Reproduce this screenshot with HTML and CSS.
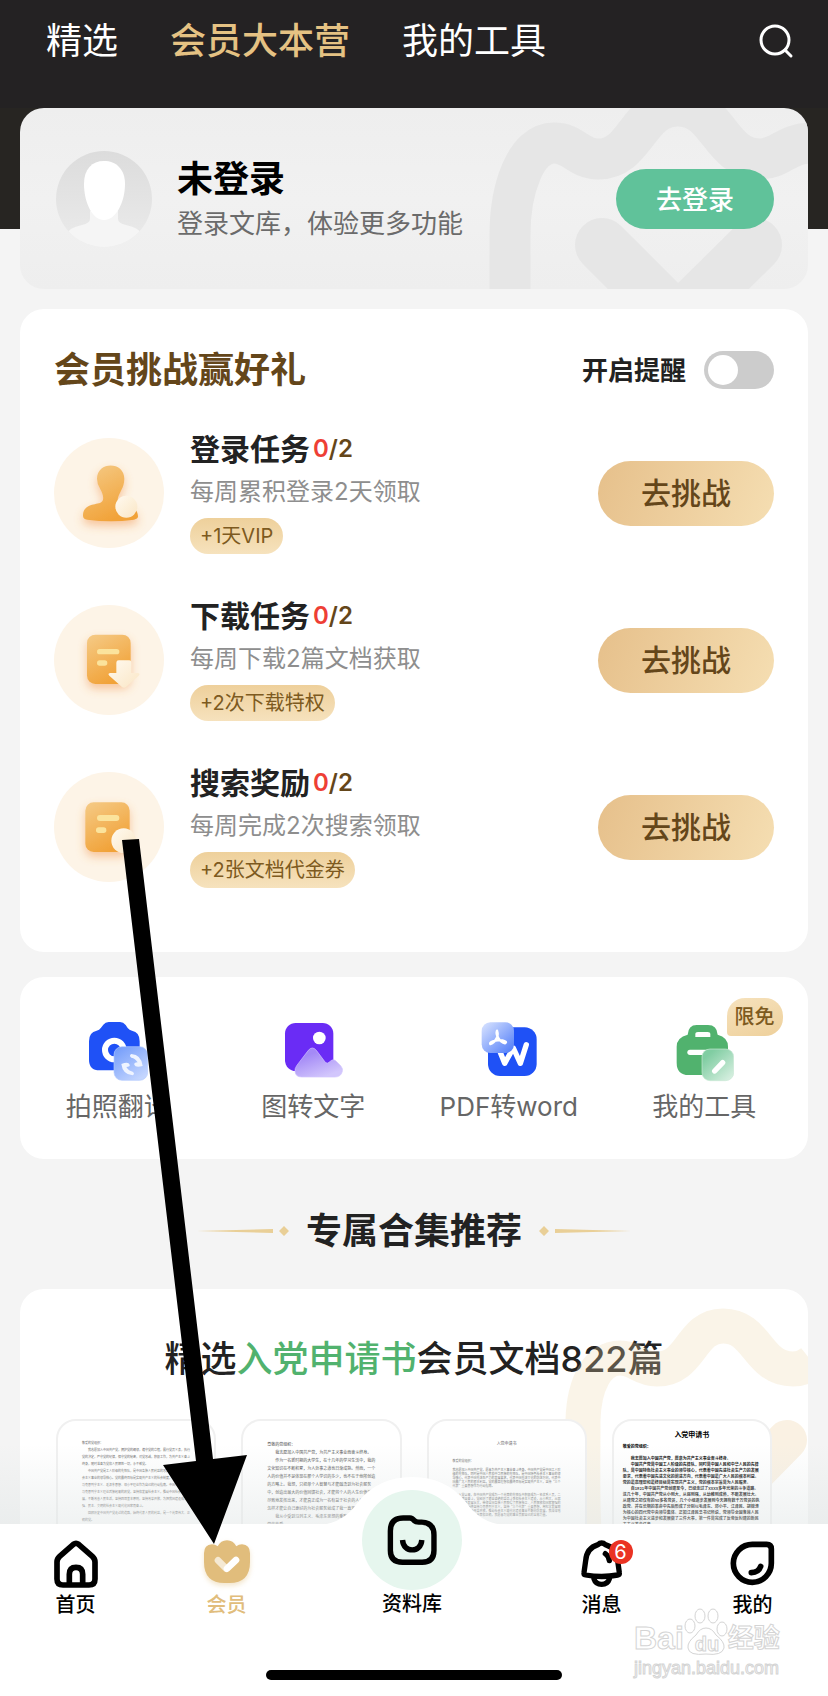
FILE: index.html
```html
<!DOCTYPE html>
<html lang="zh-CN">
<head>
  <meta charset="UTF-8">
  <meta name="viewport" content="width=device-width, initial-scale=1.0">
  <title>会员大本营</title>
  <link rel="stylesheet" href="styles.css">
</head>
<body>

<div class="app">
  <header class="topbar">
    <nav class="tabs">
      <a href="#">精选</a>
      <a href="#" class="active">会员大本营</a>
      <a href="#">我的工具</a>
    </nav>
    <button class="search" aria-label="搜索">
      <svg width="36" height="36" viewBox="0 0 36 36" fill="none" stroke="#fff" stroke-width="3" stroke-linecap="round"><circle cx="17" cy="17" r="14"/><path d="M27 27l6 6"/></svg>
    </button>
  </header>

  <main class="content">
    <section class="hero">
      <div class="login-card">
        <svg class="crown" viewBox="488 108 320 181" fill="none" stroke="#e6e6e6">
          <path stroke-width="41" d="M510 300V235C510 190 525 143 554 143C574 143 578 159 598 159C637 159 637 106 678 106C719 106 719 159 760 159C780 159 786 143 812 143"/>
          <path stroke-width="54" stroke-linecap="round" d="M602 245L678 321L755 245"/>
        </svg>
        <svg class="avatar" width="96" height="96" viewBox="0 0 96 96">
          <defs>
            <linearGradient id="avatarBg" x1="0" y1="0" x2="0" y2="1"><stop offset="0" stop-color="#dcdcdc"/><stop offset="1" stop-color="#ebebeb"/></linearGradient>
            <clipPath id="avatarClip"><circle cx="48" cy="48" r="48"/></clipPath>
          </defs>
          <g clip-path="url(#avatarClip)">
            <rect width="96" height="96" fill="url(#avatarBg)"/>
            <path fill="#f5f5f5" d="M34 60V68Q34 72 26 74Q12 77 10 84V98H86V84Q84 77 70 74Q62 72 62 68V60Z"/>
            <path fill="#fff" d="M28 33C28 18 36 10 48 10C60 10 69 18 69 33C69 51 60 69 48 69C36 69 28 51 28 33Z"/>
          </g>
        </svg>
        <div class="login-text">
          <h2>未登录</h2>
          <p>登录文库，体验更多功能</p>
        </div>
        <button class="login-btn">去登录</button>
      </div>
    </section>

    <section class="card challenge">
      <div class="challenge-head">
        <h2>会员挑战赢好礼</h2>
        <label for="remind">开启提醒</label>
        <input type="checkbox" id="remind" class="switch">
      </div>

      <div class="task">
        <svg class="task-icon" viewBox="0 0 330 330">
          <defs>
            <linearGradient id="orange" x1="0" y1="0" x2=".5" y2="1"><stop offset="0" stop-color="#f5cb87"/><stop offset="1" stop-color="#f1a238"/></linearGradient>
            <linearGradient id="cream" x1="0" y1="0" x2="1" y2="1"><stop offset="0" stop-color="#fffaf0"/><stop offset="1" stop-color="#fae6c5"/></linearGradient>
            <filter id="glow" x="-30%" y="-30%" width="160%" height="170%"><feDropShadow dx="0" dy="14" stdDeviation="14" flood-color="#f08a3c" flood-opacity=".45"/></filter>
          </defs>
          <circle cx="165" cy="165" r="165" fill="#fdf4e7"/>
          <path filter="url(#glow)" fill="url(#orange)" d="M129 122C129 69 211 69 211 122C211 150 194 164 191 184C190 194 252 195 252 235Q252 243 240 245Q170 254 100 245Q87 243 87 233C87 200 120 200 138 195C154 189 147 168 139 154Q129 138 129 122Z"/>
          <circle cx="217" cy="206" r="33" fill="url(#cream)"/>
        </svg>
        <div class="task-info">
          <h3>登录任务<span class="count"><b>0</b>/2</span></h3>
          <p>每周累积登录2天领取</p>
          <span class="pill">+1天VIP</span>
        </div>
        <button class="go">去挑战</button>
      </div>

      <div class="task">
        <svg class="task-icon" viewBox="0 0 330 330">
          <circle cx="165" cy="165" r="165" fill="#fdf4e7"/>
          <rect filter="url(#glow)" x="99" y="89" width="131" height="148" rx="25" fill="url(#orange)"/>
          <rect x="129" y="132" width="67" height="16" rx="8" fill="#fbe39c"/>
          <rect x="129" y="166" width="31" height="16" rx="8" fill="#fbe39c"/>
          <path fill="url(#cream)" d="M194 166H226Q232 166 232 173V204H252Q260 206 254 212L216 246Q210 251 204 246L166 212Q160 206 168 204H187V173Q187 166 194 166Z"/>
        </svg>
        <div class="task-info">
          <h3>下载任务<span class="count"><b>0</b>/2</span></h3>
          <p>每周下载2篇文档获取</p>
          <span class="pill">+2次下载特权</span>
        </div>
        <button class="go">去挑战</button>
      </div>

      <div class="task">
        <svg class="task-icon" viewBox="0 0 330 330">
          <circle cx="165" cy="165" r="165" fill="#fdf4e7"/>
          <rect filter="url(#glow)" x="94" y="91" width="133" height="149" rx="25" fill="url(#orange)"/>
          <rect x="129" y="129" width="67" height="18" rx="9" fill="#fbe39c"/>
          <rect x="126" y="166" width="31" height="17" rx="8" fill="#fbe39c"/>
          <circle cx="209" cy="206" r="37" fill="url(#cream)"/>
        </svg>
        <div class="task-info">
          <h3>搜索奖励<span class="count"><b>0</b>/2</span></h3>
          <p>每周完成2次搜索领取</p>
          <span class="pill">+2张文档代金券</span>
        </div>
        <button class="go">去挑战</button>
      </div>
    </section>

    <section class="card tools">
      <a href="#" class="tool">
        <svg viewBox="0 0 180 180">
          <defs>
            <linearGradient id="blueGlass" x1="0" y1="0" x2=".7" y2="1"><stop offset="0" stop-color="#6f99fa"/><stop offset="1" stop-color="#c3d5fe"/></linearGradient>
          </defs>
          <path fill="#1f51f6" d="M62 0H96Q106 0 113 9L119 18Q124 24 132 26Q155 30 155 58V113Q155 145 123 145H35Q3 145 3 113V58Q3 30 26 26Q34 24 39 17L46 8Q52 0 62 0Z"/>
          <circle cx="79" cy="84" r="28" fill="none" stroke="#fff" stroke-width="18"/>
          <rect x="78" y="74" width="101" height="101" rx="24" fill="url(#blueGlass)" stroke="#b4cafe" stroke-width="2"/>
          <path fill="#eff4ff" d="M130 96Q160 98 164 132Q142 138 139 128Q137 122 149 121Q142 109 130 107Q122 101 130 96ZM134 160Q104 158 100 126Q122 118 125 128Q127 134 115 135Q122 147 134 149Q142 155 134 160Z"/>
        </svg>
        <span>拍照翻译</span>
      </a>
      <a href="#" class="tool">
        <svg viewBox="0 0 180 180">
          <defs>
            <linearGradient id="violetGlass" x1="0" y1="0" x2=".6" y2="1"><stop offset=".3" stop-color="#a48af6"/><stop offset="1" stop-color="#d2c6fc"/></linearGradient>
          </defs>
          <rect x="6" y="3" width="145" height="144" rx="32" fill="#6a2cf5"/>
          <circle cx="109" cy="48" r="19" fill="#fff"/>
          <path fill="url(#violetGlass)" stroke="#d2c4fd" stroke-width="2" d="M41 131L76 85Q88 71 100 85L127 121Q133 126 138 121L144 116Q151 110 158 116L173 131Q180 139 178 148Q174 165 156 165H56Q38 165 36 149Q35 139 41 131Z"/>
        </svg>
        <span>图转文字</span>
      </a>
      <a href="#" class="tool">
        <svg viewBox="0 0 180 180">
          <defs>
            <linearGradient id="paleGlass" x1="0" y1="0" x2="1" y2="1"><stop offset="0" stop-color="#dbe5ff"/><stop offset="1" stop-color="#4d7af8"/></linearGradient>
          </defs>
          <rect x="27" y="16" width="146" height="146" rx="36" fill="#1f51f6"/>
          <path fill="none" stroke="#fff" stroke-width="16" stroke-linecap="round" stroke-linejoin="round" d="M61 84L77 124L103 78L124 124L142 68"/>
          <rect x="8" y="1" width="97" height="92" rx="26" fill="url(#paleGlass)"/>
          <path fill="none" stroke="#fff" stroke-width="7" stroke-linecap="round" stroke-linejoin="round" d="M54 26Q59 40 52 50Q44 64 34 66Q30 60 50 56Q66 52 78 58Q84 60 78 64Q66 62 58 48Q50 36 54 26Z"/>
        </svg>
        <span>PDF转word</span>
      </a>
      <a href="#" class="tool">
        <em class="tag">限免</em>
        <svg viewBox="0 0 180 180">
          <defs>
            <linearGradient id="greenGlass" x1="0" y1="0" x2=".9" y2="1"><stop offset=".2" stop-color="#80cda2"/><stop offset="1" stop-color="#d9f0e2"/></linearGradient>
          </defs>
          <path fill="#51b26e" fill-rule="evenodd" d="M68 9H102Q129 9 131 38Q162 46 162 74V122Q162 159 126 159H44Q8 159 8 122V74Q8 46 41 38Q43 9 68 9ZM72 30Q64 30 64 37V45H109V37Q109 30 101 30Z"/>
          <rect x="40" y="83" width="80" height="16" rx="8" fill="#fff"/>
          <rect x="84" y="81" width="95" height="95" rx="24" fill="url(#greenGlass)" stroke="#c9e9d5" stroke-width="2"/>
          <path stroke="#fff" stroke-width="16" stroke-linecap="round" d="M122 147L146 122"/>
        </svg>
        <span>我的工具</span>
      </a>
    </section>

    <div class="section-title">
      <svg width="92" height="10" viewBox="0 0 92 10" fill="#e9cf97"><path d="M0 5L76 3V7ZM87 0L92 5L87 10L82 5Z"/></svg>
      <h2>专属合集推荐</h2>
      <svg width="92" height="10" viewBox="0 0 92 10" fill="#e9cf97"><path d="M92 5L16 3V7ZM5 0L10 5L5 10L0 5Z"/></svg>
    </div>

    <section class="card docs">
      <h2>精选<span>入党申请书</span>会员文档822篇</h2>
      <svg class="deco" viewBox="564 1289 244 235" fill="none">
        <path stroke="#ecd9ae" stroke-opacity=".28" stroke-width="35" d="M584 1530C582 1500 583 1460 583 1420C584 1385 597 1358 620 1358C636 1358 640 1369 657 1369C692 1369 690 1326 723 1326C758 1326 757 1369 793 1369Q803 1369 812 1362"/>
        <path stroke="#f6e3c8" stroke-opacity=".5" stroke-width="40" stroke-linecap="round" d="M660 1440L724 1504L787 1440"/>
      </svg>
      <div class="doc-list">
        <a href="#" class="doc doc-a">
          <p class="to">敬爱的党组织：</p>
          <p>我志愿加入中国共产党，拥护党的纲领，遵守党的章程，履行党员义务，执行党的决定，严守党的纪律，保守党的秘密，对党忠诚，积极工作，为共产主义奋斗终身，随时准备为党和人民牺牲一切，永不叛党。</p>
          <p>中国共产党是工人阶级的先锋队，是中国各族人民利益的忠实代表，是中国社会主义事业的领导核心。党的最终目标是实现共产主义的社会制度，中国共产党以马克思列宁主义、毛泽东思想、邓小平理论作为自己的行动指南。中国共产党是以马克思列宁主义理论武装起来的政党，坚持和发展社会主义，推动中国社会向前发展，不断改善人民生活，坚持四项基本原则，坚持改革开放，为把我国建设成为富强、民主、文明的社会主义现代化国家而奋斗。</p>
          <p>回顾历史中国共产党走过的道路，始终代表人民的利益，是一个光荣伟大、正确的党。</p>
        </a>
        <a href="#" class="doc doc-b">
          <p class="to">尊敬的党组织：</p>
          <p>我志愿加入中国共产党，为共产主义事业而奋斗终身。</p>
          <p>作为一名新时期的大学生，在十几年的学习生活中，我的文化知识在不断积累，为人处事之道也日渐成熟。然而，一个人的价值并不是体现在那个人学识的多少，也不在于他所创造的方略上。我想，只把单个人智慧与才能融洽到为社会服务中，创造出最大的价值回馈社会，才能将个人的人生价值淋漓尽致地发挥出来，才能真正成为一名有益于社会的人！所以，怎样才能让自己更好的为社会服务就成了我一直思考的问题。</p>
          <p>我从小受到马列主义、毛泽东思想的熏陶，心中充满了对党的热爱。</p>
        </a>
        <a href="#" class="doc doc-c">
          <h4>入党申请书</h4>
          <p class="to">敬爱的党组织：</p>
          <p class="to">我志愿加入中国共产党，愿意为共产主义事业奋斗终身。中国共产党是中国工人阶级的先锋队，同时是中国人民和中华民族的先锋队，是中国特色社会主义事业的领导核心，代表中国先进生产力的发展要求，代表中国先进文化的前进方向，代表中国最广大人民的根本利益。党的最高理想和最终目标是实现共产主义，坚持“三个代表”重要思想作为行动指南。</p>
          <p class="to">自从入党以来，在中国共产党成为一个光荣的先锋队中积极成为一名优秀人员，二十多年艰苦奋斗，党经历了艰苦卓绝的革命斗争和社会主义建设，从小到大，从弱到强，不断发展壮大，带领全国各族人民取得了民族独立、人民解放和国家富强的伟大成就，始终坚持马克思列宁主义，坚持“三个代表”重要思想，用科学发展观武装头脑，坚持改革开放，推动社会主义现代化建设事业不断向前发展，我深深地认识到党的伟大、光荣和正确，我愿意为党的事业贡献自己的全部力量。</p>
        </a>
        <a href="#" class="doc doc-d">
          <h4>入党申请书</h4>
          <p class="to">敬爱的党组织：</p>
          <p>我志愿加入中国共产党，愿意为共产主义事业奋斗终身。</p>
          <p>中国共产党是中国工人阶级的先锋队，同时是中国人民和中华人民的先锋队，是中国特色社会主义事业的领导核心，代表着中国先进社会生产力的发展要求，代表着中国先进文化的前进方向，代表着中国最广大人民的根本利益。党的最高理想和最终目标是实现共产主义，党的根本宗旨是为人民服务。</p>
          <p>自1921年中国共产党创建至今，已经走过了XXXX多年光荣的斗争道路。这几十年，中国共产党从小到大，从弱到强，从幼稚到成熟，不断发展壮大。从建党之初仅有的50多名党员，几个小组逐步发展到今天拥有数千万党员的执政党。并在长期的革命中先后形成了分别以毛泽东、邓小平、江泽民、胡锦涛为核心的四代党中央领导集体。正如江泽民总书记所说，党领导全国各族人民为中国社会主义进步和发展做了三件大事，第一件是完成了反帝反封建的新民主主义革命任务。</p>
        </a>
      </div>
    </section>
  </main>

  <nav class="bottom-nav">
    <svg class="bump" width="184" height="48" viewBox="0 0 184 48" fill="#fff"><path d="M0 48Q24 46 38 25Q58 0 92 0Q126 0 146 25Q160 46 184 48Z"/></svg>
    <a href="#">
      <svg width="44" height="48" viewBox="0 0 132 144" fill="none" stroke="#000" stroke-width="17"><path d="M9 66Q9 56 17 49L58 13Q66 7 74 13L115 49Q123 56 123 66V117Q123 135 105 135H27Q9 135 9 117Z"/><path d="M46 135V103Q46 82 66 82Q86 82 86 103V135"/></svg>
      <span>首页</span>
    </a>
    <a href="#" class="active">
      <svg width="46" height="48" viewBox="0 0 138 144" fill="none" stroke-width="20" stroke-linecap="round"><path class="vip-shape" fill="#e1bd7c" d="M0 40Q0 14 24 13Q34 13 41 19Q50 1 69 1Q88 1 97 19Q104 13 114 13Q138 14 138 40V66Q138 129 76 129H62Q0 129 0 66Z"/><path stroke="#f5e9d3" d="M42 61L66 85"/><path stroke="#fff" d="M69 86L96 60"/></svg>
      <span>会员</span>
    </a>
    <a href="#" class="library">
      <i><svg width="50" height="50" viewBox="-2 -1 148 148" fill="none" stroke="#000" stroke-width="16"><path d="M46 8H66Q73 8 79 16Q83 20 92 20H100Q137 21 137 58V104Q137 139 102 139H44Q8 139 8 104V46Q8 8 46 8Z"/><path d="M44 73C46 112 99 112 101 73"/></svg></i>
      <span>资料库</span>
    </a>
    <a href="#">
      <svg width="42" height="48" viewBox="0 0 126 144" fill="none" stroke="#000" stroke-width="16" stroke-linecap="round"><path d="M62 9Q68 9 73 14Q107 24 110 62L115 98Q116 104 110 105Q62 114 14 105Q8 104 9 98L14 62Q17 24 51 14Q56 9 62 9Z"/><path d="M39 117Q44 133 62 133Q80 133 85 117M73 41Q83 48 85 62"/></svg>
      <em class="badge">6</em>
      <span>消息</span>
    </a>
    <a href="#">
      <svg width="45" height="48" viewBox="0 0 135 144" fill="none" stroke="#000" stroke-width="17" stroke-linecap="round"><path d="M67 13H110Q124 13 124 27V70A57 57 0 0 1 10 70A57 57 0 0 1 67 13Z"/><path d="M64 98Q86 97 92 79"/></svg>
      <span>我的</span>
    </a>
    <div class="home-bar"></div>
  </nav>

  <svg class="pointer" width="125" height="706" viewBox="122 839 125 706"><path d="M122 840L139 839L213 1459L247 1455L214 1544L163 1465L196 1461Z"/></svg>

  <div class="watermark">
    <div class="brand">
      <b>Bai</b>
      <span class="paw">
        <svg width="44" height="48" viewBox="0 0 44 48" fill="#fff" stroke="#d4d4d4"><ellipse cx="6" cy="18" rx="5" ry="7"/><ellipse cx="16" cy="8" rx="5" ry="7"/><ellipse cx="29" cy="8" rx="5" ry="7"/><ellipse cx="38" cy="21" rx="5" ry="7"/><path d="M22 20Q28 20 32 27Q41 34 40 40Q38 48 22 46Q5 48 4 40Q3 34 12 27Q16 20 22 20Z"/></svg>
        <b>du</b>
      </span>
      <b class="cn">经验</b>
    </div>
    <div class="url">jingyan.baidu.com</div>
  </div>
</div>

</body>
</html>
```

FILE: styles.css
```css
* {
  box-sizing: border-box;
}
body {
  margin: 0;
  font-family: Inter, "Noto Sans CJK SC", sans-serif;
  background-color: #f4f4f4;
  color: #222;
}
h2, h3, h4, p {
  margin: 0;
}
a {
  color: inherit;
  text-decoration: none;
}
button {
  border: none;
  font-family: inherit;
  cursor: pointer;
}
em, i {
  font-style: normal;
}
.app {
  position: relative;
  display: flex;
  flex-direction: column;
  height: 100vh;
  overflow: hidden;
}

/* Cabecera */
.topbar {
  display: flex;
  justify-content: space-between;
  align-items: flex-start;
  height: 108px;
  padding: 21px 34px 0 46px;
  background-color: #242223;
  flex-shrink: 0;
}
.tabs {
  display: flex;
  gap: 52px;
  font-size: 36px;
  line-height: 40px;
  color: #fff;
}
.tabs .active {
  color: #e5c283;
  font-weight: 500;
}
.search {
  padding: 2px 0 0;
  background: none;
}
.search svg {
  display: block;
}
.content {
  flex: 1;
  min-height: 0;
  overflow: hidden;
}

/* Login */
.hero {
  padding: 0 20px;
  background: linear-gradient(#272522 121px, transparent 121px);
}
.login-card {
  position: relative;
  display: flex;
  align-items: center;
  height: 181px;
  padding: 0 34px 0 36px;
  border-radius: 24px;
  background: linear-gradient(#eee, #f1f1f1 50%, #eee);
  overflow: hidden;
}
.crown {
  position: absolute;
  top: 0;
  right: 0;
  height: 181px;
}
.login-text {
  flex: 1;
  margin-left: 25px;
}
.login-text h2 {
  font-size: 36px;
  line-height: 50px;
  font-weight: 600;
  color: #000;
}
.login-text p {
  font-size: 26px;
  line-height: 40px;
  color: #6b6b6b;
}
.login-btn {
  position: relative;
  width: 158px;
  height: 60px;
  padding: 0 0 2px;
  border-radius: 30px;
  background-color: #60c29a;
  color: #fff;
  font-size: 26px;
  font-weight: 500;
}

/* Tarjetas */
.card {
  position: relative;
  margin: 0 20px;
  border-radius: 24px;
  background-color: #fff;
}
.challenge {
  margin-top: 20px;
  padding: 42px 34px 64px;
}
.challenge-head {
  display: flex;
  align-items: center;
  height: 38px;
  margin-bottom: 43px;
}
.challenge-head h2 {
  flex: 1;
  font-size: 36px;
  line-height: 38px;
  font-weight: 600;
  color: #64461a;
}
.challenge-head label {
  padding-bottom: 3px;
  font-size: 26px;
  font-weight: 600;
}
.switch {
  appearance: none;
  width: 70px;
  height: 38px;
  margin: 0 0 0 18px;
  padding: 4px;
  border-radius: 19px;
  background-color: #ccc;
}
.switch::before {
  content: "";
  display: block;
  width: 30px;
  height: 30px;
  border-radius: 50%;
  background-color: #fff;
}
.switch:checked {
  background-color: #60c29a;
}
.switch:checked::before {
  margin-left: auto;
}
.task {
  display: flex;
  align-items: center;
}
.task + .task {
  margin-top: 45px;
}
.task-icon {
  width: 110px;
  height: 110px;
}
.task-info {
  display: flex;
  flex-direction: column;
  align-items: flex-start;
  gap: 10px;
  flex: 1;
  margin-left: 26px;
}
.task-info h3 {
  display: flex;
  align-items: center;
  height: 34px;
  font-size: 30px;
  line-height: 34px;
  font-weight: 600;
}
.count {
  margin-left: 3px;
  font-size: 24px;
  color: #64461a;
}
.count b {
  font-weight: 600;
  color: #ee3f35;
}
.task-info p {
  height: 32px;
  font-size: 24px;
  line-height: 32px;
  color: #8e8e8e;
}
.pill {
  height: 36px;
  padding: 0 10px;
  border-radius: 18px;
  background: linear-gradient(#eed09b, #f6e2bd);
  font-size: 20px;
  line-height: 36px;
  color: #7d5a20;
}
.go {
  width: 176px;
  height: 65px;
  padding: 0 0 5px;
  border-radius: 33px;
  background: linear-gradient(110deg, #e6c08b, #f5deb2);
  color: #64461a;
  font-size: 30px;
  font-weight: 500;
}

/* Herramientas */
.tools {
  display: grid;
  grid-template-columns: repeat(4, 1fr);
  margin-top: 25px;
  padding: 45px 6px 37px 0;
}
.tool {
  position: relative;
  display: flex;
  flex-direction: column;
  align-items: center;
  gap: 10px;
  font-size: 26px;
  line-height: 30px;
  color: #666;
}
.tool svg {
  width: 60px;
  height: 60px;
}
.tag {
  position: absolute;
  top: -24px;
  left: 120px;
  padding: 0 8px;
  border-radius: 18px 18px 18px 4px;
  background: linear-gradient(160deg, #f6e2bd, #eed09b);
  font-size: 20px;
  line-height: 38px;
  font-weight: 500;
  color: #7d5a20;
}
.section-title {
  display: flex;
  justify-content: center;
  align-items: center;
  gap: 17px;
  height: 130px;
  padding-top: 14px;
}
.section-title h2 {
  font-size: 36px;
  line-height: 40px;
  font-weight: 600;
}

/* Documentos */
.docs {
  height: 420px;
  padding: 50px 36px 0;
  overflow: hidden;
}
.docs h2 {
  margin-bottom: 39px;
  text-align: center;
  font-size: 36px;
  line-height: 41px;
  font-weight: 500;
}
.docs h2 span {
  color: #51b26e;
}
.deco {
  position: absolute;
  top: 0;
  right: 0;
  width: 244px;
}
.doc-list {
  position: relative;
  display: grid;
  grid-template-columns: repeat(4, 1fr);
  gap: 25px;
}
.doc {
  height: 225px;
  padding: 0 24px;
  border: 2px solid #f0f0f0;
  border-radius: 20px;
  background-color: #fff;
  font-family: "Noto Sans CJK SC", sans-serif;
  overflow: hidden;
}
.doc p {
  text-indent: 2em;
}
.doc .to {
  text-indent: 0;
}
.doc h4 {
  text-align: center;
}
.doc-a {
  padding-top: 19px;
  font-size: 3px;
  line-height: 7px;
  color: #666;
}
.doc-b {
  padding-top: 19px;
  font-size: 4px;
  line-height: 8px;
  color: #444;
}
.doc-c {
  padding-top: 18px;
  font-size: 3px;
  line-height: 4px;
  color: #666;
}
.doc-c h4 {
  margin-bottom: 12px;
  font-size: 4px;
  line-height: 8px;
  font-weight: 400;
}
.doc-c p {
  margin-bottom: 5px;
}
.doc-d {
  padding: 8px 9px 0;
  font-size: 4px;
  line-height: 6px;
  font-weight: 700;
  color: #000;
}
.doc-d h4 {
  margin-bottom: 4px;
  font-size: 7px;
  line-height: 10px;
}
.doc-d .to {
  margin-bottom: 6px;
}

/* Menu inferior */
.bottom-nav {
  position: relative;
  display: grid;
  grid-template-columns: 1fr 1fr 224px 1fr 1fr;
  height: 172px;
  padding-top: 16px;
  background-color: #fff;
  flex-shrink: 0;
}
.bottom-nav::before {
  content: "";
  position: absolute;
  left: 0;
  right: 0;
  top: -80px;
  height: 80px;
  background: linear-gradient(rgba(225, 230, 230, 0), rgba(225, 230, 230, .5));
}
.bump {
  position: absolute;
  left: 50%;
  top: -47px;
  margin-left: -94px;
}
.bottom-nav a {
  position: relative;
  display: flex;
  flex-direction: column;
  align-items: center;
  gap: 5px;
  height: 76px;
  font-size: 20px;
  line-height: 24px;
  font-weight: 500;
  color: #000;
}
.bottom-nav a.active {
  color: #e1bd7c;
}
.bottom-nav a svg {
  overflow: visible;
}
.vip-shape {
  filter: drop-shadow(0 8px 8px rgba(225, 189, 124, .4));
}
.bottom-nav a.library {
  justify-content: flex-end;
  gap: 2px;
  padding-right: 4px;
}
.library i {
  display: grid;
  place-items: center;
  width: 100px;
  height: 100px;
  flex-shrink: 0;
  border-radius: 50%;
  background-color: #e6f6ee;
}
.badge {
  position: absolute;
  top: 0;
  left: 50%;
  width: 24px;
  height: 24px;
  margin-left: 7px;
  border-radius: 50%;
  background-color: #ea3323;
  color: #fff;
  text-align: center;
  font-weight: 400;
}
.home-bar {
  position: absolute;
  left: 50%;
  bottom: 16px;
  width: 296px;
  height: 10px;
  margin-left: -148px;
  border-radius: 5px;
  background-color: #000;
}

/* Flecha y marca de agua */
.pointer {
  position: absolute;
  left: 122px;
  top: 839px;
}
.watermark {
  position: absolute;
  right: 44px;
  bottom: 16px;
  width: 150px;
  color: #fff;
  font-family: "Liberation Sans", "Noto Sans CJK SC", sans-serif;
  -webkit-text-stroke: 1px #d4d4d4;
}
.brand {
  display: flex;
  align-items: flex-end;
  font-size: 32px;
  line-height: 36px;
}
.paw {
  position: relative;
}
.paw svg {
  display: block;
}
.paw b {
  position: absolute;
  left: 11px;
  bottom: 0;
  font-size: 20px;
  line-height: 24px;
}
.brand .cn {
  font-size: 26px;
}
.url {
  font-size: 18px;
  line-height: 24px;
}
```
